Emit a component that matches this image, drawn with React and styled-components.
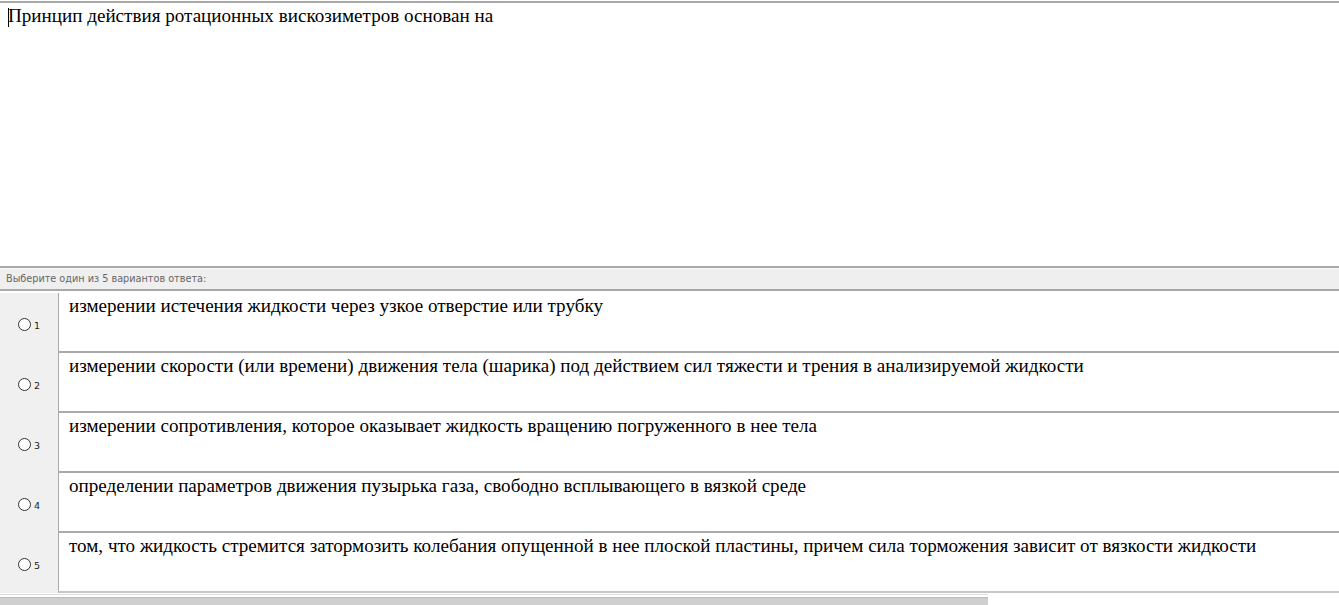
import React from 'react'
import styled, { createGlobalStyle } from 'styled-components'

const GlobalStyle = createGlobalStyle`
  html, body {
    margin: 0;
    padding: 0;
    background: #ffffff;
  }
`;

const answers = [
    'измерении истечения жидкости через узкое отверстие или трубку',
    'измерении скорости (или времени) движения тела (шарика) под действием сил тяжести и трения в анализируемой жидкости',
    'измерении сопротивления, которое оказывает жидкость вращению погруженного в нее тела',
    'определении параметров движения пузырька газа, свободно всплывающего в вязкой среде',
    'том, что жидкость стремится затормозить колебания опущенной в нее плоской пластины, причем сила торможения зависит от вязкости жидкости',
];

export default function App() {
  return (
    <Page>
        <GlobalStyle />
        <Question>
            <Caret />
            Принцип действия ротационных вискозиметров основан на
        </Question>
        <Hint>Выберите один из 5 вариантов ответа:</Hint>
        <Answers>
            {
                answers.map((text, i)=>{
                    return(
                        <Row key={i}>
                            <Marker>
                                <Radio />
                                <Num>{i + 1}</Num>
                            </Marker>
                            <AnswerText last={i === answers.length - 1}>{text}</AnswerText>
                        </Row>
                    )
                })
            }
        </Answers>
        <Scroll />
    </Page>
  )
}

const Page = styled.div`
    width: 1339px;
    height: 605px;
    overflow: hidden;
    display: flex;
    flex-direction: column;
    background: #fff;
`;

const Question = styled.div`
    flex: none;
    border-top: 2px solid #a9a9a9;
    margin-top: 1px;
    height: 265px;
    box-sizing: border-box;
    padding: 2px 0 0 8px;
    font-family: "Liberation Serif", "Times New Roman", serif;
    font-size: 19.1px;
    line-height: 22px;
    color: #000;
    position: relative;
`;

const Caret = styled.span`
    position: absolute;
    left: 8px;
    top: 5px;
    width: 1px;
    height: 19px;
    background: #000;
`;

const Hint = styled.div`
    flex: none;
    border-top: 2px solid #a9a9a9;
    border-bottom: 2px solid #a9a9a9;
    box-shadow: inset 0 1px 0 #fafafa;
    background: #efefef;
    height: 25px;
    padding: 3px 0 0 6px;
    box-sizing: border-box;
    font-family: "DejaVu Sans", Tahoma, sans-serif;
    font-size: 9.7px;
    line-height: 16px;
    color: #666;
`;

const Answers = styled.div`
    flex: none;
    display: flex;
    flex-direction: column;
    margin-top: 2px;
`;

const Row = styled.div`
    display: flex;
    height: 60px;
`;

const Marker = styled.div`
    width: 58px;
    flex: none;
    background: #f0f0f0;
    display: flex;
    align-items: center;
    padding-left: 18px;
    box-sizing: border-box;
    padding-top: 2px;
`;

const Radio = styled.span`
    width: 11px;
    height: 11px;
    border: 1px solid #333;
    border-radius: 50%;
    background: #fff;
`;

const Num = styled.span`
    margin-left: 3px;
    margin-top: 3px;
    font-family: "DejaVu Sans", Tahoma, sans-serif;
    font-size: 9.5px;
    color: #222;
`;

const AnswerText = styled.div`
    flex: 1;
    border-left: 1px solid #aaa;
    border-bottom: ${p => p.last ? '2px solid #c8c8c8' : '2px solid #aaa'};
    padding: 2px 0 0 10px;
    font-family: "Liberation Serif", "Times New Roman", serif;
    font-size: 19.1px;
    line-height: 22px;
    color: #000;
`;

const Scroll = styled.div`
    flex: none;
    width: 988px;
    margin-top: 1px;
    height: 11px;
    border-top: 1px solid #ddd;
    box-shadow: inset 0 2px 0 #fff, inset 0 3px 0 #bbb;
    background: #cfcfcf;
`;
